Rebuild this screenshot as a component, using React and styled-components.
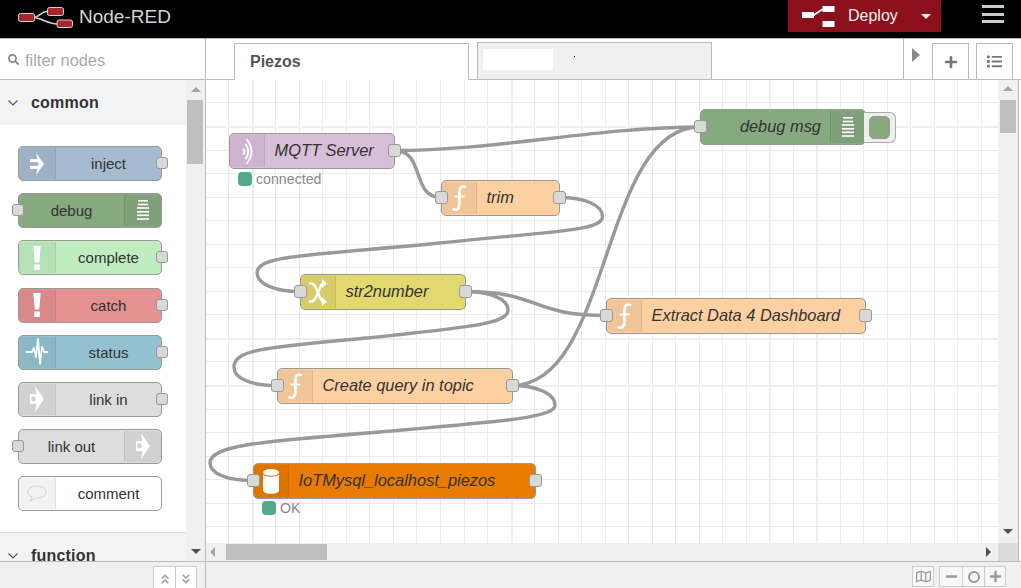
import React from "react";
import styled, { createGlobalStyle } from "styled-components";
import { FaSearch, FaPlus, FaList, FaRegMap, FaMinus, FaAngleDoubleUp, FaAngleDoubleDown } from "react-icons/fa";

const GlobalStyle = createGlobalStyle`
  html, body {
    margin: 0;
    padding: 0;
    overflow: hidden;
    background: #fff;
    font-family: "Liberation Sans", Arial, sans-serif;
  }
  * {
    box-sizing: border-box;
  }
`;

const Page = styled.div`
  width: 1021px;
  height: 588px;
  display: flex;
  flex-direction: column;
  overflow: hidden;
`;

const Header = styled.header`
  height: 39px;
  flex: none;
  background: #000;
  border-bottom: 1px solid #bbb;
  display: flex;
  align-items: flex-start;
`;

const Brand = styled.div`
  margin-left: 18px;
  height: 34px;
  display: flex;
  align-items: center;
  gap: 6px;
  color: #d4d4d4;
  font-size: 19px;
`;

const DeployButton = styled.div`
  margin-left: auto;
  width: 153px;
  height: 32px;
  background: #8c101c;
  color: #eee;
  font-size: 16px;
  display: flex;
  align-items: center;
  padding-left: 14px;
`;

const DeployLabel = styled.span`
  margin-left: 13px;
  margin-top: -1px;
  flex: 1;
`;

const Caret = styled.span`
  width: 0;
  height: 0;
  border-left: 5px solid transparent;
  border-right: 5px solid transparent;
  border-top: 5px solid #eee;
  margin-right: 10px;
`;

const MenuButton = styled.div`
  width: 22px;
  margin: 5px 17px 0 41px;
  display: flex;
  flex-direction: column;
  gap: 4.5px;
`;

const MenuBar = styled.span`
  height: 3px;
  background: #ccc;
`;

const Main = styled.div`
  flex: 1;
  display: flex;
  min-height: 0;
`;

const Palette = styled.aside`
  width: 206px;
  flex: none;
  display: flex;
  flex-direction: column;
  border-right: 1px solid #bbb;
`;

const Filter = styled.div`
  height: 41px;
  flex: none;
  border-bottom: 1px solid #bbb;
  display: flex;
  align-items: center;
  padding: 3px 0 0 8px;
  gap: 6px;
  color: #aaa;
  font-size: 16.4px;
  svg {
    color: #888;
    margin-top: -3px;
  }
`;

const PaletteBody = styled.div`
  flex: 1;
  display: flex;
  min-height: 0;
`;

const Categories = styled.div`
  width: 186px;
  flex: none;
  overflow: hidden;
`;

const CategoryHeader = styled.div`
  height: ${(p) => p.$height}px;
  background: #f3f3f3;
  display: flex;
  align-items: center;
  padding: ${(p) => (p.$clipped ? "18px 0 0 8px" : "0 0 0 8px")};
  gap: 13px;
  font-size: 16px;
  line-height: 12px;
  font-weight: bold;
  letter-spacing: 0.2px;
  color: #333;
`;

const CategoryItems = styled.div`
  height: 408px;
  padding: 21.2px 0 0 18px;
  border-bottom: 1px solid #ddd;
  display: flex;
  flex-direction: column;
  gap: 12.14px;
`;

const Scrollbar = styled.div`
  background: #f0f0f0;
  position: relative;
  flex: none;
  width: ${(p) => p.$width}px;
`;

const ScrollThumb = styled.div`
  position: absolute;
  left: ${(p) => p.$left}px;
  top: ${(p) => p.$top}px;
  width: ${(p) => p.$w}px;
  height: ${(p) => p.$h}px;
  background: #bfbfbf;
`;

const Arrow = styled.span`
  position: absolute;
  left: ${(p) => p.$left}px;
  top: ${(p) => p.$top}px;
  width: 0;
  height: 0;
  border-style: solid;
  border-color: transparent;
  border-width: 5px;
  ${(p) => p.$dir === "up" && `border-top-width: 0; border-bottom-color: ${p.$color};`}
  ${(p) => p.$dir === "down" && `border-bottom-width: 0; border-top-color: ${p.$color};`}
  ${(p) => p.$dir === "left" && `border-left-width: 0; border-right-color: ${p.$color};`}
  ${(p) => p.$dir === "right" && `border-right-width: 0; border-left-color: ${p.$color};`}
`;

const TabArrow = styled.span`
  position: absolute;
  left: 8px;
  top: 9px;
  width: 0;
  height: 0;
  border-style: solid;
  border-color: transparent transparent transparent #888;
  border-width: 7.5px 0 7.5px 8px;
`;

const BottomBar = styled.div`
  height: 27px;
  flex: none;
  background: #f0f0f0;
  border-top: 1px solid #bbb;
  display: flex;
  justify-content: flex-end;
  align-items: flex-start;
  padding-top: 4px;
`;

const PaletteFooterButtons = styled.div`
  display: flex;
  margin-right: 8px;
  background: #fff;
  border: 1px solid #ccc;
  border-bottom: none;
  height: 24px;
  svg {
    color: #aaa;
  }
`;

const FooterCell = styled.div`
  width: ${(p) => p.$w || 21}px;
  display: flex;
  align-items: center;
  justify-content: center;
  & + & {
    border-left: 1px solid #ccc;
  }
`;

const PaletteNode = styled.div`
  position: relative;
  width: 144px;
  height: 35px;
  flex: none;
  background: ${(p) => p.$color};
  border: 1px solid #999;
  border-radius: 5px;
  display: flex;
  flex-direction: ${(p) => (p.$iconRight ? "row-reverse" : "row")};
`;

const CanvasNode = styled.div`
  position: absolute;
  left: ${(p) => p.$x - 206}px;
  top: ${(p) => p.$y - 80}px;
  width: ${(p) => p.$w}px;
  height: 36px;
  background: ${(p) => p.$color};
  border: 1px solid #999;
  border-radius: 5px;
  display: flex;
  flex-direction: ${(p) => (p.$iconRight ? "row-reverse" : "row")};
`;

const IconStrip = styled.div`
  width: ${(p) => p.$w}px;
  flex: none;
  background: rgba(0, 0, 0, 0.05);
  display: flex;
  align-items: center;
  justify-content: center;
  margin: 1px 0;
  border-style: solid;
  border-color: rgba(0, 0, 0, 0.08);
  border-width: ${(p) => (p.$iconRight ? "0 0 0 1px" : "0 1px 0 0")};
  border-radius: ${(p) => (p.$iconRight ? "0 4px 4px 0" : "4px 0 0 4px")};
`;

const PaletteLabel = styled.div`
  flex: 1;
  text-align: center;
  font-size: 15px;
  line-height: 33px;
  color: #333;
`;

const NodeLabel = styled.div`
  flex: 1;
  font-size: 16.4px;
  font-style: italic;
  line-height: 33px;
  color: #333;
  white-space: nowrap;
  padding-left: 9.5px;
  text-align: ${(p) => (p.$iconRight ? "right" : "left")};
  padding-right: ${(p) => (p.$iconRight ? "9px" : "0")};
`;

const Port = styled.span`
  position: absolute;
  top: 50%;
  ${(p) => p.$side}: -7px;
  margin-top: ${(p) => (p.$large ? "-7px" : "-6.5px")};
  width: ${(p) => (p.$large ? 13 : 12)}px;
  height: ${(p) => (p.$large ? 13 : 12)}px;
  background: #d9d9d9;
  border: 1px solid #999;
  border-radius: 3px;
`;

const Status = styled.div`
  position: absolute;
  left: ${(p) => p.$x - 206}px;
  top: ${(p) => p.$y - 80}px;
  display: flex;
  align-items: center;
  gap: 4px;
  color: #888;
  font-size: 14.2px;
  line-height: 14px;
`;

const StatusDot = styled.span`
  width: 14px;
  height: 14px;
  border-radius: 4px;
  background: #53a988;
`;

const DebugToggle = styled.div`
  position: absolute;
  left: 100%;
  top: 2px;
  width: 32px;
  height: 31px;
  margin-left: -1px;
  background: #eee;
  border: 1px solid #aaa;
  border-left: none;
  border-radius: 0 6px 6px 0;
  display: flex;
  align-items: center;
  justify-content: flex-end;
  padding-right: 5px;
`;

const DebugToggleFill = styled.span`
  width: 21px;
  height: 23px;
  background: #87a980;
  border: 1px solid #999;
  border-radius: 5px;
`;

const Workspace = styled.main`
  flex: 1;
  min-width: 0;
  display: flex;
  flex-direction: column;
`;

const TabBar = styled.div`
  height: 41px;
  flex: none;
  border-bottom: 1px solid #bbb;
  display: flex;
  align-items: flex-end;
  padding-left: 28px;
`;

const Tab = styled.div`
  width: 235px;
  height: 37px;
  border: 1px solid #bbb;
  border-bottom: none;
  background: ${(p) => (p.$active ? "#fff" : "#f0f0f0")};
  margin-bottom: ${(p) => (p.$active ? "-1px" : "0")};
  margin-right: 8px;
  position: relative;
  z-index: 1;
  padding-left: 15px;
  line-height: 35px;
  font-size: 16px;
  font-weight: bold;
  color: #555;
`;

const TabRedaction = styled.div`
  position: absolute;
  left: 5px;
  top: 6px;
  width: 70px;
  height: 21px;
  background: #fff;
`;

const TabSpeck = styled.div`
  position: absolute;
  left: 96px;
  top: 13px;
  width: 1px;
  height: 1px;
  background: #000;
`;

const TabScroller = styled.div`
  margin-left: 183px;
  height: 40px;
  width: 29px;
  border-left: 1px solid #bbb;
  position: relative;
`;

const TabTool = styled.div`
  width: 37px;
  height: 36px;
  border: 1px solid #bbb;
  border-bottom: none;
  margin-right: 7px;
  display: flex;
  align-items: center;
  justify-content: center;
  color: #777;
`;

const ChartRow = styled.div`
  flex: 1;
  min-height: 0;
  display: grid;
  grid-template-columns: 792px 20px;
  grid-template-rows: 1fr 18px;
  background: #f0f0f0;
  border-right: 1px solid #bbb;
  margin-right: 2px;
`;

const Chart = styled.div`
  position: relative;
  overflow: hidden;
  background: #fff;
`;

const CanvasLayer = styled.svg`
  position: absolute;
  inset: 0;
  width: 792px;
  height: 463px;
`;

const Corner = styled.div`
  background: #dcdcdc;
`;

const ZoomGroup = styled.div`
  display: flex;
  height: 21px;
  background: #f7f7f7;
  border: 1px solid #ccc;
  color: #999;
`;

const WorkspaceFooter = styled(BottomBar)`
  padding-right: 15px;
  gap: 5px;
`;

const ZoomRing = styled.span`
  width: 12px;
  height: 12px;
  border: 2px solid #999;
  border-radius: 50%;
`;

const Logo = () => (
  <svg width="55" height="21" viewBox="0 0 55 21">
    <path d="M16 10.5 C21 10.5 23 4.5 29 4.5 M16 10.5 C22 10.5 30 17 39 17" fill="none" stroke="#d4d4d4" strokeWidth="1.5" />
    <rect x="0.5" y="6.5" width="16" height="8" rx="2" fill="#a6262c" stroke="#d4d4d4" />
    <rect x="29.5" y="0.5" width="16" height="8" rx="2" fill="#a6262c" stroke="#d4d4d4" />
    <rect x="39" y="13" width="15.5" height="7.5" rx="2" fill="#a6262c" stroke="#d4d4d4" />
  </svg>
);

const DeployIcon = () => (
  <svg width="33" height="21" viewBox="0 0 33 21" fill="#fff">
    <rect x="0" y="6" width="12" height="6" />
    <path d="M11 9.5 L21 3" stroke="#fff" strokeWidth="2" />
    <rect x="20.5" y="0" width="12" height="6" />
    <rect x="20.5" y="15" width="12" height="6" />
  </svg>
);

const ChevronIcon = () => (
  <svg width="10" height="6" viewBox="0 0 10 6" fill="none" stroke="#555" strokeWidth="1.1">
    <path d="M0.5 0.5 L5 5 L9.5 0.5" />
  </svg>
);

const InjectIcon = () => (
  <svg width="14" height="24" viewBox="0 0 14 24" fill="#fff">
    <rect x="0" y="7" width="8" height="3.2" />
    <rect x="0" y="13.8" width="8" height="3.2" />
    <path d="M6 1 L14 12 L6 23 L8.5 12 Z" />
  </svg>
);

const DebugIcon = () => (
  <svg width="12" height="21" viewBox="0 0 12 21" fill="#fff">
    {[0, 3.7, 7.2, 11, 14.5, 18.2].map((y, i) => (
      <rect key={y} x={i < 2 ? 1 : 0} y={y} width={i < 2 ? 10 : 12} height="1.6" />
    ))}
  </svg>
);

const AlertIcon = () => (
  <svg width="8" height="24" viewBox="0 0 8 24" fill="#fff">
    <path d="M0.3 0 H7.7 L6.2 16.5 H1.8 Z" />
    <rect x="1.2" y="18.5" width="5.6" height="5.5" />
  </svg>
);

const StatusIcon = () => (
  <svg width="22" height="28" viewBox="0 0 22 28" fill="none" stroke="#fff" strokeWidth="1.8" strokeLinejoin="round">
    <polyline points="0,14 6,14 8,10 10,19 12,1 14,26 16,9 18,14 22,14" />
  </svg>
);

const LinkIcon = () => (
  <svg width="14" height="26" viewBox="0 0 14 26" fill="#fff">
    <path
      fillRule="evenodd"
      d="M5 0 L14 13 L5 26 L6.5 18 H0 V8 H6.5 Z M3.4 10.6 A2.4 2.4 0 1 0 3.4 15.4 A2.4 2.4 0 1 0 3.4 10.6 Z"
    />
  </svg>
);

const CommentIcon = () => (
  <svg width="20" height="17" viewBox="0 0 20 17" fill="none" stroke="#d8d8d8" strokeWidth="1.1">
    <path d="M10 1 C4 1 1 4 1 7 C1 9.5 3 11.3 5 12 L3 16 L9 13 C16 13.5 19 10 19 7 C19 4 16 1 10 1 Z" />
  </svg>
);

const MqttIcon = () => (
  <svg width="11" height="27" viewBox="0 0 11 27" fill="none" stroke="#fff" strokeWidth="1.8">
    <path d="M1 10.5 Q3.8 13.5 1 16.5" />
    <path d="M3.5 6 Q9 13.5 3.5 21" />
    <path d="M4.5 1 Q14.5 13.5 4.5 26" />
  </svg>
);

const FunctionIcon = () => (
  <svg width="15" height="26" viewBox="0 0 15 26" fill="none" stroke="#fff" strokeWidth="2.6">
    <path d="M14 2.4 C10 0 7.4 2.5 7.4 7 V19 C7.4 23.5 5 26 0.6 23.8" />
    <path d="M2.5 11.5 H12.5" strokeWidth="1.8" />
  </svg>
);

const SwapIcon = () => (
  <svg width="18" height="27" viewBox="0 0 18 27">
    <g fill="none" stroke="#fff" strokeWidth="2.5">
      <path d="M0 4.5 H2 C6 4.5 7 9 9 13.5 C11 18 12 22.5 14 22.5" />
      <path d="M0 22.5 H2 C6 22.5 7 18 9 13.5 C11 9 12 4.5 14 4.5" />
    </g>
    <path d="M13 0 L18 4.5 L13 9 Z M13 18 L18 22.5 L13 27 Z" fill="#fff" />
  </svg>
);

const DatabaseIcon = () => (
  <svg width="16" height="25" viewBox="0 0 16 25" fill="#fff">
    <ellipse cx="8" cy="3.4" rx="8" ry="3.4" />
    <path d="M0 5.6 C2 8.4 14 8.4 16 5.6 V22 C14 25.8 2 25.8 0 22 Z" />
  </svg>
);

const paletteNodes = [
  { label: "inject", color: "#a6bbcf", icon: <InjectIcon />, out: true },
  { label: "debug", color: "#87a980", icon: <DebugIcon />, iconRight: true },
  { label: "complete", color: "#c0edc0", icon: <AlertIcon />, out: true },
  { label: "catch", color: "#e49191", icon: <AlertIcon />, out: true },
  { label: "status", color: "#94c1d0", icon: <StatusIcon />, out: true },
  { label: "link in", color: "#ddd", icon: <LinkIcon />, out: true },
  { label: "link out", color: "#ddd", icon: <LinkIcon />, iconRight: true },
  { label: "comment", color: "#fff", icon: <CommentIcon /> },
];

const flowNodes = [
  { label: "MQTT Server", x: 229, y: 133, w: 166, color: "#d8bfd8", icon: <MqttIcon />, out: true },
  { label: "trim", x: 441, y: 180, w: 119, color: "#fdd0a2", icon: <FunctionIcon />, in: true, out: true },
  { label: "str2number", x: 300, y: 274, w: 166, color: "#e2d96e", icon: <SwapIcon />, in: true, out: true },
  { label: "Extract Data 4 Dashboard", x: 606, y: 298, w: 260, color: "#fdd0a2", icon: <FunctionIcon />, in: true, out: true },
  { label: "Create query in topic", x: 277, y: 368, w: 236, color: "#fdd0a2", icon: <FunctionIcon />, in: true, out: true },
  { label: "IoTMysql_localhost_piezos", x: 253, y: 463, w: 283, color: "#e97b00", icon: <DatabaseIcon />, in: true, out: true },
  { label: "debug msg", x: 700, y: 109, w: 166, color: "#87a980", icon: <DebugIcon />, in: true, iconRight: true, toggle: true },
];

const wires = [
  "M395 150.5 C495 150.5 600 127 700 127",
  "M395 150.5 C425 150.5 411 197.5 441 197.5",
  "M559 197.5 C585 197.5 602.5 205 602.5 216.5 C602.5 231 555 231 430 244 C300 256 257 256 257 273 C257 284 275 291.5 300 291.5",
  "M465 291.5 C540 291.5 530 315.5 606 315.5",
  "M465 291.5 C490 291.5 508 299 508 310 C508 324 470 327 367 338 C270 347 234 349 234 367 C234 379 252 385.5 277 385.5",
  "M512 385.5 C612 385.5 600 127 700 127",
  "M512 385.5 C535 385.5 555 393 555 405 C555 418 505 421 367 433 C255 442 210 446 210 463 C210 474 228 480.5 253 480.5",
];

// grid lines as they land in the page, with the few heavier ones of the scaled capture
const verticals = Array.from({ length: 33 }, (_, i) => Math.round(229.4 + i * 23.51));
const horizontals = Array.from({ length: 19 }, (_, i) => Math.round(103.4 + i * 23.55));
const heavyX = [253, 512, 771, 818];
const heavyY = [127, 339, 386];

const GridLines = () => (
  <CanvasLayer viewBox="206 80 792 463">
    {verticals.map((x) => {
      const heavy = heavyX.some((h) => Math.abs(h - x) < 3);
      return <rect key={x} x={x - 1} y="80" width={heavy ? 2 : 1} height="463" fill={heavy ? "#eee" : "#ebebeb"} />;
    })}
    {horizontals.map((y) => {
      const heavy = heavyY.some((h) => Math.abs(h - y) < 3);
      return <rect key={y} x="206" y={y - 1} width="792" height={heavy ? 2 : 1} fill={heavy ? "#eee" : "#ebebeb"} />;
    })}
  </CanvasLayer>
);

const Wires = () => (
  <CanvasLayer viewBox="206 80 792 463" fill="none" stroke="#999" strokeWidth="3.4">
    {wires.map((d) => (
      <path key={d} d={d} />
    ))}
  </CanvasLayer>
);

const App = () => (
  <Page>
    <GlobalStyle />
    <Header>
      <Brand>
        <Logo />
        Node-RED
      </Brand>
      <DeployButton>
        <DeployIcon />
        <DeployLabel>Deploy</DeployLabel>
        <Caret />
      </DeployButton>
      <MenuButton>
        <MenuBar />
        <MenuBar />
        <MenuBar />
      </MenuButton>
    </Header>
    <Main>
      <Palette>
        <Filter>
          <FaSearch size={11} />
          filter nodes
        </Filter>
        <PaletteBody>
          <Categories>
            <CategoryHeader $height={45}>
              <ChevronIcon />
              common
            </CategoryHeader>
            <CategoryItems>
              {paletteNodes.map((node) => (
                <PaletteNode key={node.label} $color={node.color} $iconRight={node.iconRight}>
                  <IconStrip $w={37} $iconRight={node.iconRight}>
                    {node.icon}
                  </IconStrip>
                  <PaletteLabel>{node.label}</PaletteLabel>
                  {node.out && <Port $side="right" />}
                  {node.iconRight && <Port $side="left" />}
                </PaletteNode>
              ))}
            </CategoryItems>
            <CategoryHeader $height={28} $clipped>
              <ChevronIcon />
              function
            </CategoryHeader>
          </Categories>
          <Scrollbar $width={19}>
            <Arrow $dir="up" $color="#a3a3a3" $left={5} $top={7} />
            <ScrollThumb $left={1} $top={20} $w={16} $h={64} />
            <Arrow $dir="down" $color="#505050" $left={5} $top={469} />
          </Scrollbar>
        </PaletteBody>
        <BottomBar>
          <PaletteFooterButtons>
            <FooterCell>
              <FaAngleDoubleUp size={12} />
            </FooterCell>
            <FooterCell>
              <FaAngleDoubleDown size={12} />
            </FooterCell>
          </PaletteFooterButtons>
        </BottomBar>
      </Palette>
      <Workspace>
        <TabBar>
          <Tab $active>Piezos</Tab>
          <Tab>
            <TabRedaction />
            <TabSpeck />
          </Tab>
          <TabScroller>
            <TabArrow />
          </TabScroller>
          <TabTool>
            <FaPlus size={14} />
          </TabTool>
          <TabTool>
            <FaList size={15} />
          </TabTool>
        </TabBar>
        <ChartRow>
          <Chart>
            <GridLines />
            <Wires />
            {flowNodes.map((node) => (
              <CanvasNode key={node.label} $x={node.x} $y={node.y} $w={node.w} $color={node.color} $iconRight={node.iconRight}>
                <IconStrip $w={35} $iconRight={node.iconRight}>
                  {node.icon}
                </IconStrip>
                <NodeLabel $iconRight={node.iconRight}>{node.label}</NodeLabel>
                {node.in && <Port $side="left" $large />}
                {node.out && <Port $side="right" $large />}
                {node.toggle && (
                  <DebugToggle>
                    <DebugToggleFill />
                  </DebugToggle>
                )}
              </CanvasNode>
            ))}
            <Status $x={238} $y={172}>
              <StatusDot />
              connected
            </Status>
            <Status $x={262} $y={501}>
              <StatusDot />
              OK
            </Status>
          </Chart>
          <Scrollbar $width={20}>
            <Arrow $dir="up" $color="#a3a3a3" $left={5} $top={6} />
            <ScrollThumb $left={2} $top={20} $w={16} $h={33} />
            <Arrow $dir="down" $color="#505050" $left={5} $top={449} />
          </Scrollbar>
          <Scrollbar>
            <Arrow $dir="left" $color="#a3a3a3" $left={4} $top={4} />
            <ScrollThumb $left={20} $top={1} $w={101} $h={16} />
            <Arrow $dir="right" $color="#505050" $left={780} $top={4} />
          </Scrollbar>
          <Corner />
        </ChartRow>
        <WorkspaceFooter>
          <ZoomGroup>
            <FooterCell $w={20}>
              <FaRegMap size={15} />
            </FooterCell>
          </ZoomGroup>
          <ZoomGroup>
            <FooterCell $w={22}>
              <FaMinus size={13} />
            </FooterCell>
            <FooterCell $w={22}>
              <ZoomRing />
            </FooterCell>
            <FooterCell $w={21}>
              <FaPlus size={13} />
            </FooterCell>
          </ZoomGroup>
        </WorkspaceFooter>
      </Workspace>
    </Main>
  </Page>
);

export default App;
